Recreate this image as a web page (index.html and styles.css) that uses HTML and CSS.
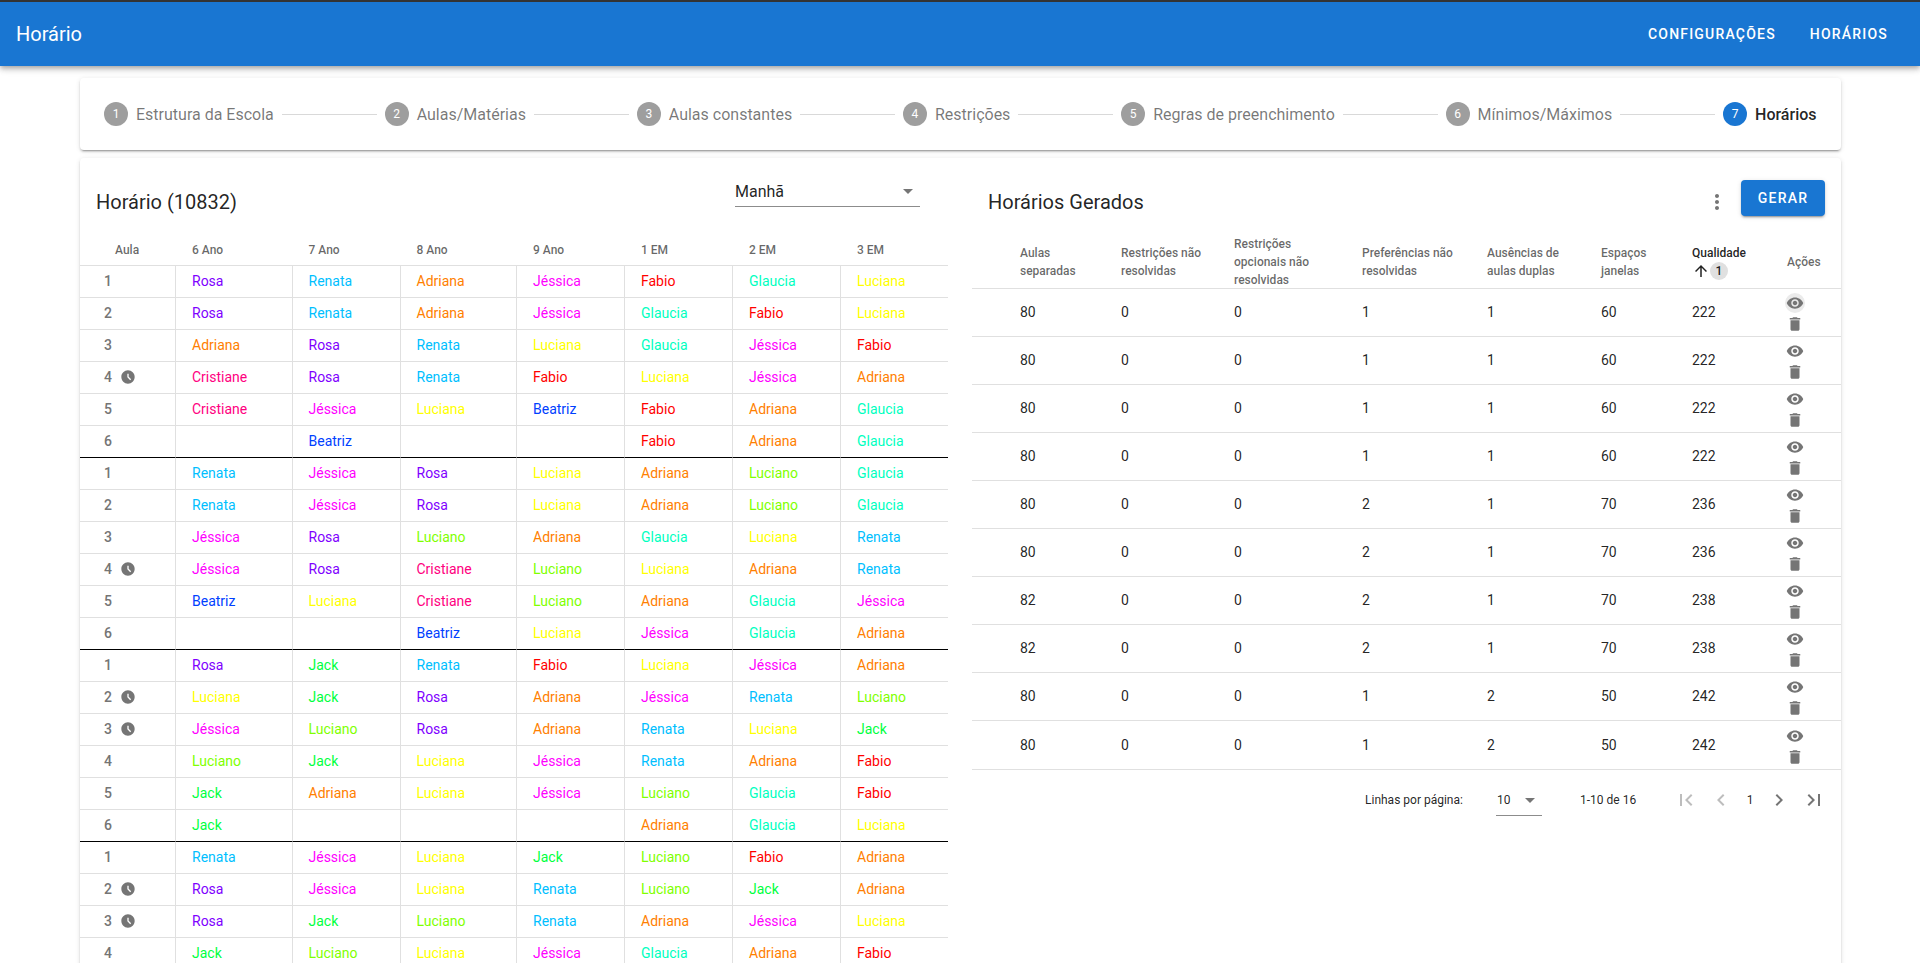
FILE: index.html
```html
<!DOCTYPE html>
<html lang="pt-BR">
<head>
<meta charset="UTF-8">
<title>Horário</title>
<link rel="stylesheet" href="styles.css">
</head>
<body>
<svg class="sprite" xmlns="http://www.w3.org/2000/svg">
	<symbol id="i-clock" viewBox="0 0 24 24"><path d="M11.99 2C6.47 2 2 6.48 2 12s4.47 10 9.99 10C17.52 22 22 17.52 22 12S17.52 2 11.99 2zm3.3 14.71L11 12.41V7h2v4.59l3.71 3.71-1.42 1.41z"/></symbol>
	<symbol id="i-eye" viewBox="0 0 24 24"><path d="M12 4.5C7 4.5 2.73 7.61 1 12c1.73 4.39 6 7.5 11 7.5s9.27-3.11 11-7.5c-1.73-4.39-6-7.5-11-7.5zM12 17c-2.76 0-5-2.24-5-5s2.24-5 5-5 5 2.24 5 5-2.24 5-5 5zm0-8c-1.66 0-3 1.34-3 3s1.34 3 3 3 3-1.34 3-3-1.34-3-3-3z"/></symbol>
	<symbol id="i-trash" viewBox="0 0 24 24"><path d="M6 19c0 1.1.9 2 2 2h8c1.1 0 2-.9 2-2V7H6v12zM19 4h-3.5l-1-1h-5l-1 1H5v2h14V4z"/></symbol>
	<symbol id="i-more" viewBox="0 0 24 24"><path d="M12 8c1.1 0 2-.9 2-2s-.9-2-2-2-2 .9-2 2 .9 2 2 2zm0 2c-1.1 0-2 .9-2 2s.9 2 2 2 2-.9 2-2-.9-2-2-2zm0 6c-1.1 0-2 .9-2 2s.9 2 2 2 2-.9 2-2-.9-2-2-2z"/></symbol>
	<symbol id="i-up" viewBox="0 0 24 24"><path d="M4 12l1.41 1.41L11 7.83V20h2V7.83l5.58 5.59L20 12l-8-8-8 8z"/></symbol>
	<symbol id="i-first" viewBox="0 0 24 24"><path d="M18.41 16.59L13.82 12l4.59-4.59L17 6l-6 6 6 6zM6 6h2v12H6z"/></symbol>
	<symbol id="i-prev" viewBox="0 0 24 24"><path d="M15.41 7.41L14 6l-6 6 6 6 1.41-1.41L10.83 12z"/></symbol>
	<symbol id="i-next" viewBox="0 0 24 24"><path d="M10 6L8.59 7.41 13.17 12l-4.58 4.59L10 18l6-6z"/></symbol>
	<symbol id="i-last" viewBox="0 0 24 24"><path d="M5.59 7.41L10.18 12l-4.59 4.59L7 18l6-6-6-6zM16 6h2v12h-2z"/></symbol>
	<symbol id="i-drop" viewBox="0 0 24 24"><path d="M7 10l5 5 5-5z"/></symbol>
</svg>

<header class="appbar">
	<h1 class="appbar-title">Horário</h1>
	<nav class="appbar-nav">
		<a class="nav-link">Configurações</a>
		<a class="nav-link">Horários</a>
	</nav>
</header>

<main class="page">
	<section class="card stepper">
		<div class="step"><span class="step-num">1</span><span class="step-label">Estrutura da Escola</span></div>
		<div class="step-line"></div>
		<div class="step"><span class="step-num">2</span><span class="step-label">Aulas/Matérias</span></div>
		<div class="step-line"></div>
		<div class="step"><span class="step-num">3</span><span class="step-label">Aulas constantes</span></div>
		<div class="step-line"></div>
		<div class="step"><span class="step-num">4</span><span class="step-label">Restrições</span></div>
		<div class="step-line"></div>
		<div class="step"><span class="step-num">5</span><span class="step-label">Regras de preenchimento</span></div>
		<div class="step-line"></div>
		<div class="step"><span class="step-num">6</span><span class="step-label">Mínimos/Máximos</span></div>
		<div class="step-line"></div>
		<div class="step active"><span class="step-num">7</span><span class="step-label">Horários</span></div>
	</section>

	<section class="card content">
		<div class="panel">
			<div class="toolbar toolbar-left">
				<h2 class="panel-title">Horário (10832)</h2>
				<div class="turno-select">
					<span>Manhã</span>
					<svg class="drop-icon"><use href="#i-drop"/></svg>
				</div>
			</div>
			<table class="grade">
				<colgroup>
					<col class="g-aula"><col class="g-a"><col class="g-b"><col class="g-a"><col class="g-b"><col class="g-b"><col class="g-b"><col class="g-b">
				</colgroup>
				<thead>
					<tr><th class="th-aula">Aula</th><th>6 Ano</th><th>7 Ano</th><th>8 Ano</th><th>9 Ano</th><th>1 EM</th><th>2 EM</th><th>3 EM</th></tr>
				</thead>
				<tbody>
					<tr><td class="aula">1</td><td class="rosa">Rosa</td><td class="renata">Renata</td><td class="adriana">Adriana</td><td class="jessica">Jéssica</td><td class="fabio">Fabio</td><td class="glaucia">Glaucia</td><td class="luciana">Luciana</td></tr>
					<tr><td class="aula">2</td><td class="rosa">Rosa</td><td class="renata">Renata</td><td class="adriana">Adriana</td><td class="jessica">Jéssica</td><td class="glaucia">Glaucia</td><td class="fabio">Fabio</td><td class="luciana">Luciana</td></tr>
					<tr><td class="aula">3</td><td class="adriana">Adriana</td><td class="rosa">Rosa</td><td class="renata">Renata</td><td class="luciana">Luciana</td><td class="glaucia">Glaucia</td><td class="jessica">Jéssica</td><td class="fabio">Fabio</td></tr>
					<tr><td class="aula">4<svg class="clock"><use href="#i-clock"/></svg></td><td class="cristiane">Cristiane</td><td class="rosa">Rosa</td><td class="renata">Renata</td><td class="fabio">Fabio</td><td class="luciana">Luciana</td><td class="jessica">Jéssica</td><td class="adriana">Adriana</td></tr>
					<tr><td class="aula">5</td><td class="cristiane">Cristiane</td><td class="jessica">Jéssica</td><td class="luciana">Luciana</td><td class="beatriz">Beatriz</td><td class="fabio">Fabio</td><td class="adriana">Adriana</td><td class="glaucia">Glaucia</td></tr>
					<tr class="fim-dia"><td class="aula">6</td><td></td><td class="beatriz">Beatriz</td><td></td><td></td><td class="fabio">Fabio</td><td class="adriana">Adriana</td><td class="glaucia">Glaucia</td></tr>

					<tr><td class="aula">1</td><td class="renata">Renata</td><td class="jessica">Jéssica</td><td class="rosa">Rosa</td><td class="luciana">Luciana</td><td class="adriana">Adriana</td><td class="luciano">Luciano</td><td class="glaucia">Glaucia</td></tr>
					<tr><td class="aula">2</td><td class="renata">Renata</td><td class="jessica">Jéssica</td><td class="rosa">Rosa</td><td class="luciana">Luciana</td><td class="adriana">Adriana</td><td class="luciano">Luciano</td><td class="glaucia">Glaucia</td></tr>
					<tr><td class="aula">3</td><td class="jessica">Jéssica</td><td class="rosa">Rosa</td><td class="luciano">Luciano</td><td class="adriana">Adriana</td><td class="glaucia">Glaucia</td><td class="luciana">Luciana</td><td class="renata">Renata</td></tr>
					<tr><td class="aula">4<svg class="clock"><use href="#i-clock"/></svg></td><td class="jessica">Jéssica</td><td class="rosa">Rosa</td><td class="cristiane">Cristiane</td><td class="luciano">Luciano</td><td class="luciana">Luciana</td><td class="adriana">Adriana</td><td class="renata">Renata</td></tr>
					<tr><td class="aula">5</td><td class="beatriz">Beatriz</td><td class="luciana">Luciana</td><td class="cristiane">Cristiane</td><td class="luciano">Luciano</td><td class="adriana">Adriana</td><td class="glaucia">Glaucia</td><td class="jessica">Jéssica</td></tr>
					<tr class="fim-dia"><td class="aula">6</td><td></td><td></td><td class="beatriz">Beatriz</td><td class="luciana">Luciana</td><td class="jessica">Jéssica</td><td class="glaucia">Glaucia</td><td class="adriana">Adriana</td></tr>

					<tr><td class="aula">1</td><td class="rosa">Rosa</td><td class="jack">Jack</td><td class="renata">Renata</td><td class="fabio">Fabio</td><td class="luciana">Luciana</td><td class="jessica">Jéssica</td><td class="adriana">Adriana</td></tr>
					<tr><td class="aula">2<svg class="clock"><use href="#i-clock"/></svg></td><td class="luciana">Luciana</td><td class="jack">Jack</td><td class="rosa">Rosa</td><td class="adriana">Adriana</td><td class="jessica">Jéssica</td><td class="renata">Renata</td><td class="luciano">Luciano</td></tr>
					<tr><td class="aula">3<svg class="clock"><use href="#i-clock"/></svg></td><td class="jessica">Jéssica</td><td class="luciano">Luciano</td><td class="rosa">Rosa</td><td class="adriana">Adriana</td><td class="renata">Renata</td><td class="luciana">Luciana</td><td class="jack">Jack</td></tr>
					<tr><td class="aula">4</td><td class="luciano">Luciano</td><td class="jack">Jack</td><td class="luciana">Luciana</td><td class="jessica">Jéssica</td><td class="renata">Renata</td><td class="adriana">Adriana</td><td class="fabio">Fabio</td></tr>
					<tr><td class="aula">5</td><td class="jack">Jack</td><td class="adriana">Adriana</td><td class="luciana">Luciana</td><td class="jessica">Jéssica</td><td class="luciano">Luciano</td><td class="glaucia">Glaucia</td><td class="fabio">Fabio</td></tr>
					<tr class="fim-dia"><td class="aula">6</td><td class="jack">Jack</td><td></td><td></td><td></td><td class="adriana">Adriana</td><td class="glaucia">Glaucia</td><td class="luciana">Luciana</td></tr>

					<tr><td class="aula">1</td><td class="renata">Renata</td><td class="jessica">Jéssica</td><td class="luciana">Luciana</td><td class="jack">Jack</td><td class="luciano">Luciano</td><td class="fabio">Fabio</td><td class="adriana">Adriana</td></tr>
					<tr><td class="aula">2<svg class="clock"><use href="#i-clock"/></svg></td><td class="rosa">Rosa</td><td class="jessica">Jéssica</td><td class="luciana">Luciana</td><td class="renata">Renata</td><td class="luciano">Luciano</td><td class="jack">Jack</td><td class="adriana">Adriana</td></tr>
					<tr><td class="aula">3<svg class="clock"><use href="#i-clock"/></svg></td><td class="rosa">Rosa</td><td class="jack">Jack</td><td class="luciano">Luciano</td><td class="renata">Renata</td><td class="adriana">Adriana</td><td class="jessica">Jéssica</td><td class="luciana">Luciana</td></tr>
					<tr><td class="aula">4</td><td class="jack">Jack</td><td class="luciano">Luciano</td><td class="luciana">Luciana</td><td class="jessica">Jéssica</td><td class="glaucia">Glaucia</td><td class="adriana">Adriana</td><td class="fabio">Fabio</td></tr>
				</tbody>
			</table>
		</div>

		<div class="panel panel-right">
			<div class="toolbar toolbar-right">
				<h2 class="panel-title">Horários Gerados</h2>
				<svg class="more-icon"><use href="#i-more"/></svg>
				<button class="btn-gerar">Gerar</button>
			</div>
			<table class="gerados">
				<colgroup>
					<col class="c1"><col class="c2"><col class="c3"><col class="c4"><col class="c5"><col class="c6"><col class="c7"><col class="c8">
				</colgroup>
				<thead>
					<tr>
						<th class="first">Aulas<br>separadas</th>
						<th>Restrições não<br>resolvidas</th>
						<th>Restrições<br>opcionais não<br>resolvidas</th>
						<th>Preferências não<br>resolvidas</th>
						<th>Ausências de<br>aulas duplas</th>
						<th>Espaços<br>janelas</th>
						<th class="sorted">Qualidade<br><svg class="sort-icon"><use href="#i-up"/></svg><span class="sort-badge">1</span></th>
						<th>Ações</th>
					</tr>
				</thead>
				<tbody>
					<tr><td class="first">80</td><td>0</td><td>0</td><td>1</td><td>1</td><td>60</td><td>222</td><td class="acoes"><span class="act hover"><svg><use href="#i-eye"/></svg></span><span class="act"><svg><use href="#i-trash"/></svg></span></td></tr>
					<tr><td class="first">80</td><td>0</td><td>0</td><td>1</td><td>1</td><td>60</td><td>222</td><td class="acoes"><span class="act"><svg><use href="#i-eye"/></svg></span><span class="act"><svg><use href="#i-trash"/></svg></span></td></tr>
					<tr><td class="first">80</td><td>0</td><td>0</td><td>1</td><td>1</td><td>60</td><td>222</td><td class="acoes"><span class="act"><svg><use href="#i-eye"/></svg></span><span class="act"><svg><use href="#i-trash"/></svg></span></td></tr>
					<tr><td class="first">80</td><td>0</td><td>0</td><td>1</td><td>1</td><td>60</td><td>222</td><td class="acoes"><span class="act"><svg><use href="#i-eye"/></svg></span><span class="act"><svg><use href="#i-trash"/></svg></span></td></tr>
					<tr><td class="first">80</td><td>0</td><td>0</td><td>2</td><td>1</td><td>70</td><td>236</td><td class="acoes"><span class="act"><svg><use href="#i-eye"/></svg></span><span class="act"><svg><use href="#i-trash"/></svg></span></td></tr>
					<tr><td class="first">80</td><td>0</td><td>0</td><td>2</td><td>1</td><td>70</td><td>236</td><td class="acoes"><span class="act"><svg><use href="#i-eye"/></svg></span><span class="act"><svg><use href="#i-trash"/></svg></span></td></tr>
					<tr><td class="first">82</td><td>0</td><td>0</td><td>2</td><td>1</td><td>70</td><td>238</td><td class="acoes"><span class="act"><svg><use href="#i-eye"/></svg></span><span class="act"><svg><use href="#i-trash"/></svg></span></td></tr>
					<tr><td class="first">82</td><td>0</td><td>0</td><td>2</td><td>1</td><td>70</td><td>238</td><td class="acoes"><span class="act"><svg><use href="#i-eye"/></svg></span><span class="act"><svg><use href="#i-trash"/></svg></span></td></tr>
					<tr><td class="first">80</td><td>0</td><td>0</td><td>1</td><td>2</td><td>50</td><td>242</td><td class="acoes"><span class="act"><svg><use href="#i-eye"/></svg></span><span class="act"><svg><use href="#i-trash"/></svg></span></td></tr>
					<tr><td class="first">80</td><td>0</td><td>0</td><td>1</td><td>2</td><td>50</td><td>242</td><td class="acoes"><span class="act"><svg><use href="#i-eye"/></svg></span><span class="act"><svg><use href="#i-trash"/></svg></span></td></tr>
				</tbody>
			</table>
			<div class="pager">
				<span class="pager-label">Linhas por página:</span>
				<div class="pager-select"><span>10</span><svg class="drop-icon"><use href="#i-drop"/></svg></div>
				<span class="pager-range">1-10 de 16</span>
				<svg class="pg-icon off first-pg"><use href="#i-first"/></svg>
				<svg class="pg-icon off"><use href="#i-prev"/></svg>
				<span class="pg-num">1</span>
				<svg class="pg-icon"><use href="#i-next"/></svg>
				<svg class="pg-icon"><use href="#i-last"/></svg>
			</div>
		</div>
	</section>
</main>
</body>
</html>
```

FILE: styles.css
```css
html, body{
	margin: 0;
	height: 100%;
	overflow: hidden;
}
body{
	font-family: Roboto, sans-serif;
	font-size: 14px;
	color: rgba(0,0,0,.87);
	background-color: #fff;
}
.sprite{
	display: none;
}
svg{
	fill: currentColor;
}

/* app bar */
.appbar{
	height: 64px;
	border-top: 2px solid #333;
	background-color: #1976d2;
	color: #fff;
	display: flex;
	align-items: center;
	justify-content: space-between;
	padding: 0 32px 0 16px;
	position: relative;
	box-shadow: 0 2px 4px -1px rgba(0,0,0,.2), 0 4px 5px 0 rgba(0,0,0,.14), 0 1px 10px 0 rgba(0,0,0,.12);
}
.appbar-title{
	margin: 0;
	font-size: 20px;
	font-weight: 400;
}
.appbar-nav{
	display: flex;
	gap: 34px;
}
.nav-link{
	font-size: 14px;
	font-weight: 500;
	letter-spacing: 1.2px;
	text-transform: uppercase;
}

.page{
	padding: 12px 79px 0 80px;
	display: flex;
	flex-direction: column;
	gap: 8px;
}
.card{
	background-color: #fff;
	border-radius: 4px;
	box-shadow: 0 3px 1px -2px rgba(0,0,0,.2), 0 2px 2px 0 rgba(0,0,0,.14), 0 1px 5px 0 rgba(0,0,0,.12);
}

/* stepper */
.stepper{
	height: 72px;
	padding: 0 16.5px 0 16px;
	display: flex;
	align-items: center;
}
.step{
	display: flex;
	align-items: center;
	padding: 0 8px;
	color: rgba(0,0,0,.54);
	font-size: 16px;
}
.step-num{
	width: 24px;
	height: 24px;
	border-radius: 50%;
	background-color: #9e9e9e;
	color: #fff;
	font-size: 12px;
	display: flex;
	align-items: center;
	justify-content: center;
	margin-right: 8px;
}
.step-line{
	flex: 1;
	border-top: 1px solid #d9d9d9;
}
.step.active{
	color: rgba(0,0,0,.87);
	font-weight: 500;
}
.step.active .step-num{
	background-color: #1976d2;
	font-weight: 400;
}

/* two panels */
.content{
	display: flex;
	gap: 24px;
	height: 900px;
}
.panel{
	width: 868px;
	flex: none;
}
.panel-right{
	width: 869px;
}
.toolbar{
	height: 77px;
	box-sizing: border-box;
	display: flex;
	align-items: flex-start;
}
.toolbar-left{
	padding: 28px 28px 0 16px;
	justify-content: space-between;
}
.toolbar-right{
	padding: 28px 16px 0 16px;
}
.panel-title{
	margin: 0;
	font-size: 20px;
	font-weight: 400;
	line-height: 32px;
}
.turno-select{
	width: 185px;
	height: 32px;
	margin-top: -11px;
	padding-top: 1px;
	box-sizing: border-box;
	border-bottom: 1px solid #8c8c8c;
	font-size: 16px;
	display: flex;
	align-items: center;
	justify-content: space-between;
	color: rgba(0,0,0,.87);
}
.drop-icon{
	width: 24px;
	height: 24px;
	color: rgba(0,0,0,.54);
}
.more-icon{
	width: 24px;
	height: 24px;
	margin: 4px 12px 0 auto;
	color: #757575;
}
.btn-gerar{
	width: 84px;
	height: 36px;
	margin-top: -6px;
	border: 0;
	border-radius: 4px;
	background-color: #1976d2;
	color: #fff;
	font-family: Roboto, sans-serif;
	font-size: 14px;
	font-weight: 500;
	letter-spacing: 1.25px;
	text-transform: uppercase;
	box-shadow: 0 3px 1px -2px rgba(0,0,0,.2), 0 2px 2px 0 rgba(0,0,0,.14), 0 1px 5px 0 rgba(0,0,0,.12);
}

/* left table */
table{
	border-collapse: separate;
	border-spacing: 0;
	table-layout: fixed;
}
.grade{
	width: 868px;
}
.g-aula{ width: 95px; }
.g-a{ width: 116.5px; }
.g-b{ width: 108px; }
.grade th{
	height: 31px;
	box-sizing: border-box;
	padding: 0 0 0 17px;
	text-align: left;
	font-size: 12px;
	font-weight: 500;
	color: rgba(0,0,0,.6);
	border-bottom: 1px solid #e0e0e0;
}
.grade .th-aula{
	padding-left: 35px;
}
.grade td{
	height: 32px;
	box-sizing: border-box;
	padding: 0 0 1px 16px;
	border-bottom: 1px solid #e0e0e0;
	border-left: 1px solid #e0e0e0;
	white-space: nowrap;
}
.grade td:first-child{
	border-left: 0;
}
.grade .aula{
	padding-left: 24px;
	font-weight: 500;
	color: #757575;
}
.fim-dia td{
	border-bottom-color: #000;
}
.clock{
	width: 16px;
	height: 16px;
	margin-left: 8px;
	vertical-align: -3px;
	color: #757575;
}

/* teacher colours */
.rosa{ color: #8000ff; }
.renata{ color: #00bfff; }
.adriana{ color: #ff8000; }
.jessica{ color: #ff00ff; }
.fabio{ color: #ff0000; }
.glaucia{ color: #00ffbf; }
.luciana{ color: #ffff00; }
.cristiane{ color: #ff0080; }
.beatriz{ color: #0040ff; }
.luciano{ color: #80ff00; }
.jack{ color: #00ff40; }

/* right table */
.gerados{
	width: 869px;
}
.c1{ width: 133px; }
.c2{ width: 113px; }
.c3{ width: 128px; }
.c4{ width: 125px; }
.c5{ width: 114px; }
.c6{ width: 91px; }
.c7{ width: 95px; }
.c8{ width: 70px; }
.gerados th{
	height: 54px;
	padding: 0 0 0 16px;
	text-align: left;
	font-size: 12px;
	font-weight: 500;
	line-height: 18px;
	color: rgba(0,0,0,.6);
	box-shadow: inset 0 -1px 0 #e0e0e0;
}
.gerados td{
	height: 48px;
	box-sizing: border-box;
	padding: 0 0 1px 16px;
	border-bottom: 1px solid #e0e0e0;
}
.gerados tbody tr:last-child td{
	height: 49px;
	padding-bottom: 0;
}
.gerados .first{
	padding-left: 48px;
}
.gerados .sorted{
	color: rgba(0,0,0,.87);
}
.sort-icon{
	width: 18px;
	height: 18px;
	vertical-align: top;
}
.sort-badge{
	display: inline-block;
	width: 18px;
	height: 18px;
	line-height: 18px;
	border-radius: 50%;
	background-color: #e0e0e0;
	text-align: center;
	font-size: 12px;
}
.gerados .acoes{
	padding: 2px 0 0 14px;
}
.act{
	display: flex;
	align-items: center;
	justify-content: center;
	width: 20px;
	height: 21px;
	color: #757575;
}
.act svg{
	width: 18px;
	height: 18px;
}
.act.hover{
	height: 20px;
	margin-bottom: 1px;
	border-radius: 50%;
	background-color: #ebebeb;
}

/* pagination */
.pager{
	height: 64px;
	margin-top: -2px;
	padding-left: 393px;
	display: flex;
	align-items: center;
	font-size: 12px;
}
.pager-label{
	width: 131px;
}
.pager-select{
	width: 46px;
	height: 32px;
	box-sizing: border-box;
	border-bottom: 1px solid #8c8c8c;
	display: flex;
	align-items: center;
	justify-content: space-between;
	padding-left: 1px;
}
.pager-range{
	margin-left: 38px;
	width: 94px;
}
.pg-icon{
	width: 24px;
	height: 24px;
	color: #757575;
	margin-right: 11px;
}
.pg-icon.off{
	color: #bdbdbd;
}
.pg-num{
	width: 34px;
	margin-left: -11px;
	text-align: center;
}
```
